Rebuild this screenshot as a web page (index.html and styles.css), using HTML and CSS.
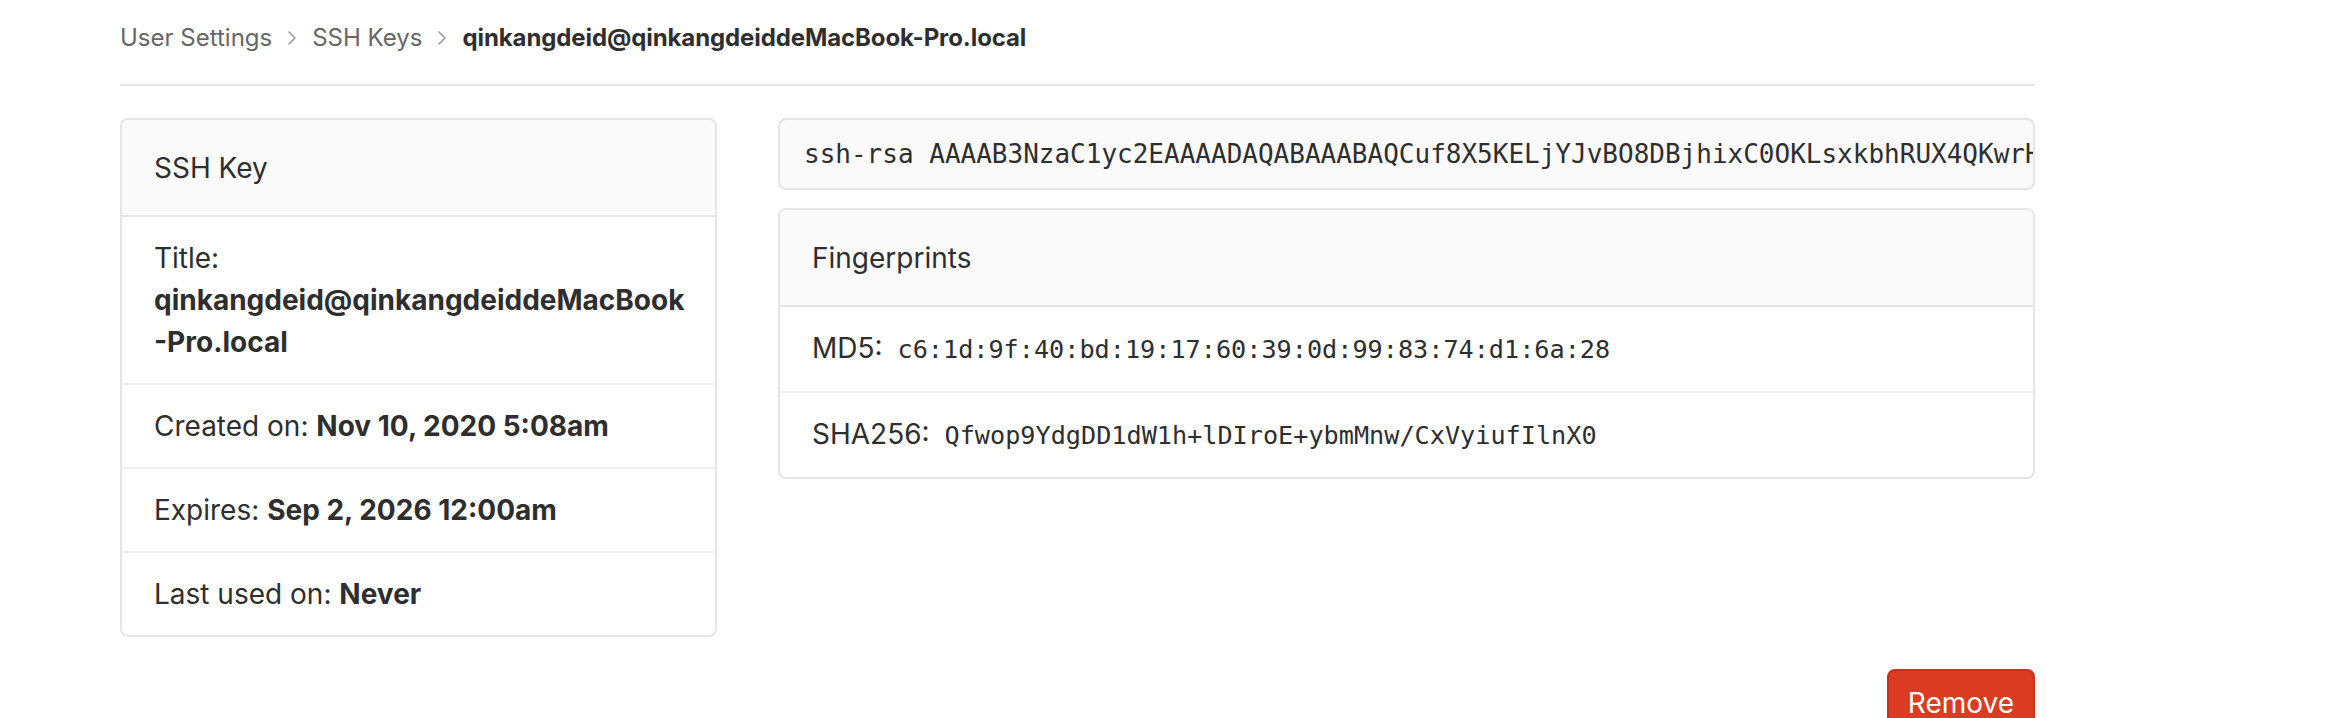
FILE: index.html
```html
<!DOCTYPE html>
<html lang="en">
<head>
<meta charset="utf-8">
<title>SSH Key</title>
<link rel="stylesheet" href="styles.css">
</head>
<body>
<div class="page">
  <nav class="breadcrumb">
    <a class="crumb">User Settings</a>
    <svg class="chev" width="10" height="16" viewBox="0 0 10 16"><path d="M2 2l6 6-6 6" fill="none" stroke="#999" stroke-width="1.6" stroke-linecap="round" stroke-linejoin="round"/></svg>
    <a class="crumb">SSH Keys</a>
    <svg class="chev" width="10" height="16" viewBox="0 0 10 16"><path d="M2 2l6 6-6 6" fill="none" stroke="#999" stroke-width="1.6" stroke-linecap="round" stroke-linejoin="round"/></svg>
    <span class="crumb current">qinkangdeid@qinkangdeiddeMacBook-Pro.local</span>
  </nav>

  <div class="content">
    <div class="col-left">
      <div class="card">
        <div class="card-header">SSH Key</div>
        <ul class="list">
          <li class="item">Title:<br><strong>qinkangdeid@qinkangdeiddeMacBook<br>-Pro.local</strong></li>
          <li class="item">Created on: <strong>Nov 10, 2020 5:08am</strong></li>
          <li class="item">Expires: <strong>Sep 2, 2026 12:00am</strong></li>
          <li class="item">Last used on: <strong>Never</strong></li>
        </ul>
      </div>
    </div>
    <div class="col-right">
      <pre class="key">ssh-rsa AAAAB3NzaC1yc2EAAAADAQABAAABAQCuf8X5KELjYJvBO8DBjhixC0OKLsxkbhRUX4QKwrHp8Zr3vQm1yTn5Lc2dWq7eYxVbKs9Gf4hJu</pre>
      <div class="card">
        <div class="card-header">Fingerprints</div>
        <ul class="list">
          <li class="item">MD5: <code>c6:1d:9f:40:bd:19:17:60:39:0d:99:83:74:d1:6a:28</code></li>
          <li class="item">SHA256: <code>Qfwop9YdgDD1dW1h+lDIroE+ybmMnw/CxVyiufIlnX0</code></li>
        </ul>
      </div>
    </div>
  </div>

  <div class="actions">
    <button class="btn-remove">Remove</button>
  </div>
</div>
</body>
</html>
```
FILE: styles.css
```css
* { box-sizing: border-box; }
html, body { margin: 0; padding: 0; background: #fff; }
body {
  font-family: Inter, Roboto, "Liberation Sans", Arial, sans-serif;
  color: #2e2e2e;
  font-size: 28px;
  line-height: 42px;
}
.page {
  width: 1915px;
  margin-left: 120px;
}
.breadcrumb {
  display: flex;
  align-items: center;
  height: 86px;
  padding-bottom: 9px;
  border-bottom: 2px solid #e5e5e5;
  font-size: 24px;
  line-height: 34px;
}
.crumb { color: #666; text-decoration: none; }
.crumb.current { color: #2e2e2e; font-weight: 700; letter-spacing: -0.1px; }
.chev { margin: 0 15px 0 15px; flex: none; }
.content {
  display: flex;
  align-items: flex-start;
  gap: 61px;
  margin-top: 32px;
}
.col-left { width: 597px; flex: none; }
.col-right { flex: 1; min-width: 0; }
.card {
  border: 2px solid #e5e5e5;
  border-radius: 8px;
  overflow: hidden;
  background: #fff;
}
.card-header {
  background: #fafafa;
  padding: 27px 32px 26px;
  border-bottom: 2px solid #e5e5e5;
}
.list { list-style: none; margin: 0; padding: 0; }
.item {
  padding: 20px 32px;
  border-bottom: 2px solid #f0f0f0;
}
.item:last-child { border-bottom: 0; }
.item strong { font-weight: 700; }
.key {
  margin: 0 0 18px;
  background: #fafafa;
  border: 2px solid #e5e5e5;
  border-radius: 8px;
  padding: 16px 24px;
  font-family: "DejaVu Sans Mono", "Liberation Mono", monospace;
  font-size: 26px;
  line-height: 36px;
  color: #2e2e2e;
  white-space: nowrap;
  overflow: hidden;
}
code {
  font-family: "DejaVu Sans Mono", "Liberation Mono", monospace;
  font-size: 25.2px;
  color: #2e2e2e;
  margin-left: 7px;
}
.actions {
  display: flex;
  justify-content: flex-end;
  margin-top: 32px;
}
.btn-remove {
  font-family: Inter, Roboto, "Liberation Sans", Arial, sans-serif;
  font-size: 28px;
  line-height: 40px;
  color: #fff;
  background: #db3b21;
  border: 2px solid #c9321a;
  border-radius: 8px;
  padding: 12px 19px;
  cursor: pointer;
}
```
